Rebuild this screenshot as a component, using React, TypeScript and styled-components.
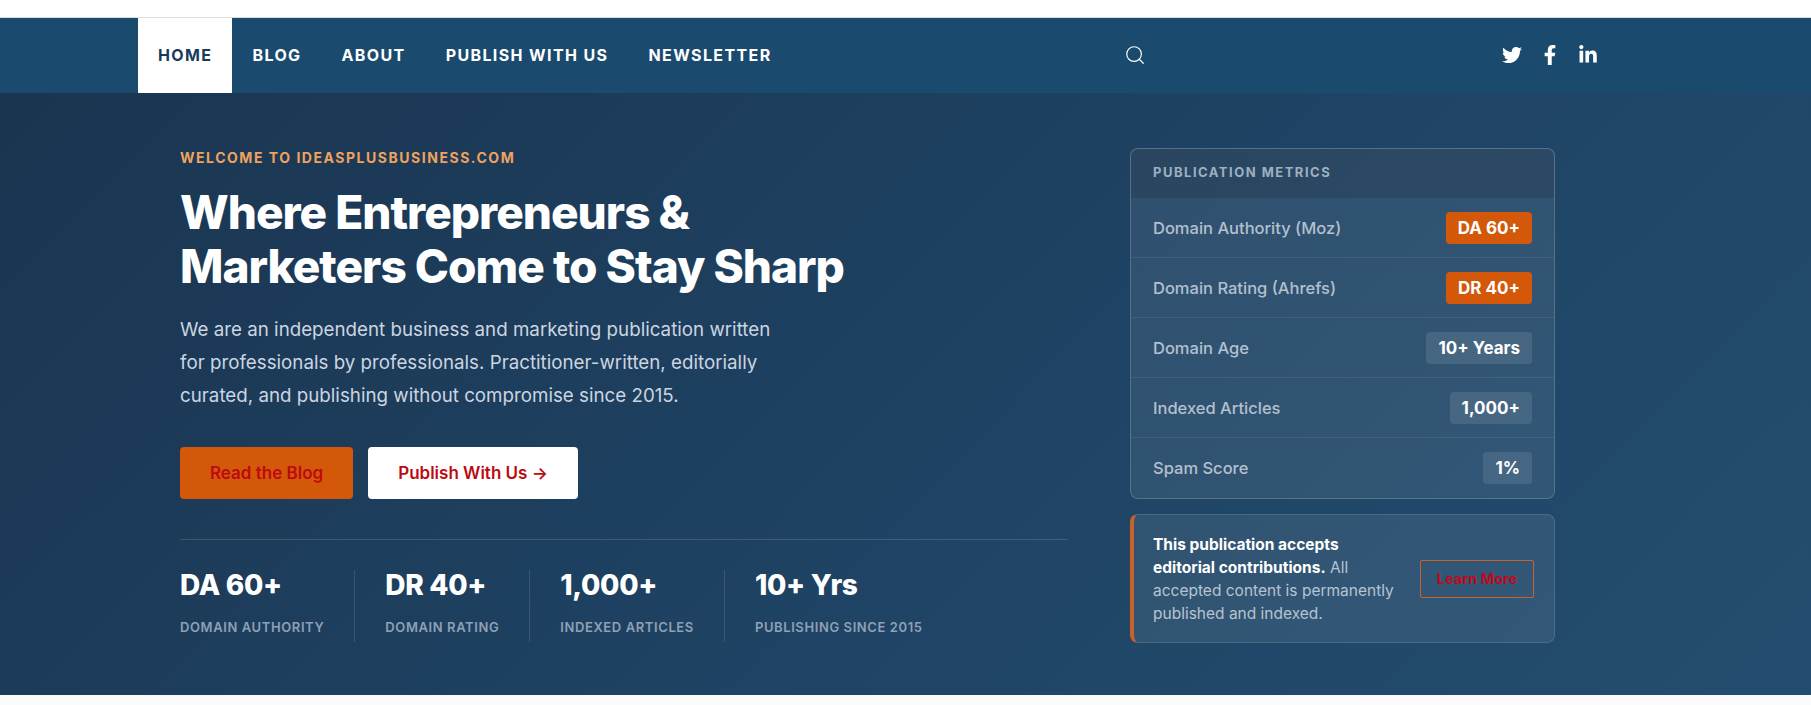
import styled, { createGlobalStyle } from "styled-components";
import { FaTwitter, FaFacebookF, FaLinkedinIn } from "react-icons/fa";
import { Search } from "lucide-react";

const GlobalStyle = createGlobalStyle`
  html, body {
    margin: 0;
    background: #fafafa;
    font-family: Inter, "Liberation Sans", sans-serif;
  }
  * {
    box-sizing: border-box;
  }
`;

const TopStrip = styled.div`
  height: 18px;
  background: #ffffff;
  border-bottom: 1px solid #dcdcdc;
`;

const NavBar = styled.nav`
  display: flex;
  align-items: stretch;
  height: 75px;
  padding: 0 213px 0 138px;
  background: #1a4a6e;
`;

const NavLink = styled.a<{ $active?: boolean }>`
  display: flex;
  align-items: center;
  padding: 0 20px 2px;
  font-size: 16px;
  font-weight: 700;
  letter-spacing: 1.38px;
  text-transform: uppercase;
  color: ${(p) => (p.$active ? "#1a3a5c" : "#ffffff")};
  background: ${(p) => (p.$active ? "#ffffff" : "transparent")};
`;

const SearchButton = styled.span`
  display: flex;
  align-items: center;
  margin-left: 332px;
  padding-bottom: 2px;
  color: #ffffff;
`;

const Socials = styled.div`
  display: flex;
  align-items: center;
  gap: 18px;
  margin-left: auto;
  padding-bottom: 2px;
  color: #ffffff;
  font-size: 20px;
`;

const Hero = styled.section`
  display: grid;
  grid-template-columns: 888px 425px;
  column-gap: 62px;
  height: 602px;
  padding: 55px 0 0 180px;
  background: linear-gradient(135deg, #1a3550 0%, #1f4364 55%, #234d70 100%);
`;

const Eyebrow = styled.div`
  margin-top: 1px;
  font-size: 14px;
  line-height: 18px;
  font-weight: 700;
  letter-spacing: 1.53px;
  color: #f0a35e;
  text-transform: uppercase;
`;

const Title = styled.h1`
  margin: 18px 0 0;
  font-size: 46px;
  line-height: 54px;
  font-weight: 800;
  letter-spacing: -1px;
  color: #ffffff;
`;

const Lead = styled.p`
  margin: 20px 0 0;
  max-width: 600px;
  font-size: 18.75px;
  line-height: 33px;
  color: #cbd5e1;
`;

const Actions = styled.div`
  display: flex;
  gap: 15px;
  margin-top: 35px;
`;

const CtaButton = styled.a<{ $light?: boolean }>`
  display: flex;
  align-items: center;
  height: 52px;
  padding: 0 30px;
  border-radius: 4px;
  font-size: 17px;
  font-weight: 600;
  color: #bc0a10;
  background: ${(p) => (p.$light ? "#ffffff" : "#d4580a")};
`;

const Stats = styled.div`
  display: flex;
  margin-top: 40px;
  padding-top: 30px;
  border-top: 1px solid rgba(255, 255, 255, 0.15);
`;

const Stat = styled.div`
  height: 72px;
  margin-right: 30px;
  padding-right: 30px;
  border-right: 1px solid rgba(255, 255, 255, 0.12);

  &:last-child {
    border-right: 0;
  }
`;

const StatValue = styled.div`
  margin-top: -1px;
  font-size: 28px;
  line-height: 32px;
  font-weight: 800;
  letter-spacing: -0.3px;
  color: #ffffff;
`;

const StatLabel = styled.div`
  margin-top: 18px;
  font-size: 13px;
  line-height: 16px;
  font-weight: 600;
  letter-spacing: 0.6px;
  color: #8ea1b5;
  text-transform: uppercase;
`;

const Sidebar = styled.aside`
  display: flex;
  flex-direction: column;
  gap: 15px;
`;

const MetricsCard = styled.div`
  border: 1px solid rgba(255, 255, 255, 0.18);
  border-radius: 8px;
  background: rgba(255, 255, 255, 0.08);
  overflow: hidden;
`;

const MetricsHeader = styled.div`
  display: flex;
  align-items: center;
  height: 49px;
  padding: 0 22px 4px;
  background: rgba(0, 0, 0, 0.12);
  font-size: 13px;
  font-weight: 700;
  letter-spacing: 1.5px;
  color: #9db0c3;
  text-transform: uppercase;
`;

const MetricRow = styled.div`
  display: flex;
  align-items: center;
  justify-content: space-between;
  height: 60px;
  padding: 0 22px;
  border-bottom: 1px solid rgba(255, 255, 255, 0.08);

  &:last-child {
    border-bottom: 0;
  }
`;

const MetricName = styled.span`
  font-size: 16.5px;
  font-weight: 500;
  color: #b3c0ce;
`;

const MetricBadge = styled.span<{ $accent?: boolean }>`
  display: flex;
  align-items: center;
  height: 32px;
  padding: 0 12px;
  border-radius: 4px;
  font-size: 17px;
  font-weight: 700;
  color: #ffffff;
  background: ${(p) => (p.$accent ? "#d4580a" : "rgba(255, 255, 255, 0.1)")};
`;

const Callout = styled.div`
  display: flex;
  align-items: center;
  justify-content: space-between;
  height: 129px;
  padding: 0 20px 0 19px;
  border: 1px solid rgba(255, 255, 255, 0.12);
  border-left: 4px solid #c9622a;
  border-radius: 8px;
  background: rgba(255, 255, 255, 0.08);
`;

const CalloutText = styled.p`
  width: 246px;
  margin: 0;
  font-size: 15.5px;
  line-height: 23px;
  color: #b7c4d2;

  strong {
    font-weight: 700;
    color: #ffffff;
  }
`;

const LearnMore = styled.a`
  display: flex;
  align-items: center;
  justify-content: center;
  flex-shrink: 0;
  width: 114px;
  height: 38px;
  border: 1px solid #c9622a;
  border-radius: 2px;
  font-size: 14.5px;
  font-weight: 700;
  color: #bc0a1e;
`;

const navItems = ["Home", "Blog", "About", "Publish With Us", "Newsletter"];

const stats = [
  { value: "DA 60+", label: "Domain Authority" },
  { value: "DR 40+", label: "Domain Rating" },
  { value: "1,000+", label: "Indexed Articles" },
  { value: "10+ Yrs", label: "Publishing Since 2015" },
];

const metrics = [
  { name: "Domain Authority (Moz)", value: "DA 60+", accent: true },
  { name: "Domain Rating (Ahrefs)", value: "DR 40+", accent: true },
  { name: "Domain Age", value: "10+ Years" },
  { name: "Indexed Articles", value: "1,000+" },
  { name: "Spam Score", value: "1%" },
];

export default function App() {
  return (
    <>
      <GlobalStyle />
      <TopStrip />
      <NavBar>
        {navItems.map((item, i) => (
          <NavLink key={item} $active={i === 0}>
            {item}
          </NavLink>
        ))}
        <SearchButton>
          <Search size={22} strokeWidth={1.3} />
        </SearchButton>
        <Socials>
          <FaTwitter />
          <FaFacebookF />
          <FaLinkedinIn />
        </Socials>
      </NavBar>
      <Hero>
        <div>
          <Eyebrow>Welcome to IdeasPlusBusiness.com</Eyebrow>
          <Title>
            Where Entrepreneurs &amp;
            <br />
            Marketers Come to Stay Sharp
          </Title>
          <Lead>
            We are an independent business and marketing publication written for professionals by
            professionals. Practitioner-written, editorially curated, and publishing without
            compromise since 2015.
          </Lead>
          <Actions>
            <CtaButton>Read the Blog</CtaButton>
            <CtaButton $light>Publish With Us →</CtaButton>
          </Actions>
          <Stats>
            {stats.map((s) => (
              <Stat key={s.label}>
                <StatValue>{s.value}</StatValue>
                <StatLabel>{s.label}</StatLabel>
              </Stat>
            ))}
          </Stats>
        </div>
        <Sidebar>
          <MetricsCard>
            <MetricsHeader>Publication Metrics</MetricsHeader>
            {metrics.map((m) => (
              <MetricRow key={m.name}>
                <MetricName>{m.name}</MetricName>
                <MetricBadge $accent={m.accent}>{m.value}</MetricBadge>
              </MetricRow>
            ))}
          </MetricsCard>
          <Callout>
            <CalloutText>
              <strong>This publication accepts editorial contributions.</strong> All accepted
              content is permanently published and indexed.
            </CalloutText>
            <LearnMore>Learn More</LearnMore>
          </Callout>
        </Sidebar>
      </Hero>
    </>
  );
}
